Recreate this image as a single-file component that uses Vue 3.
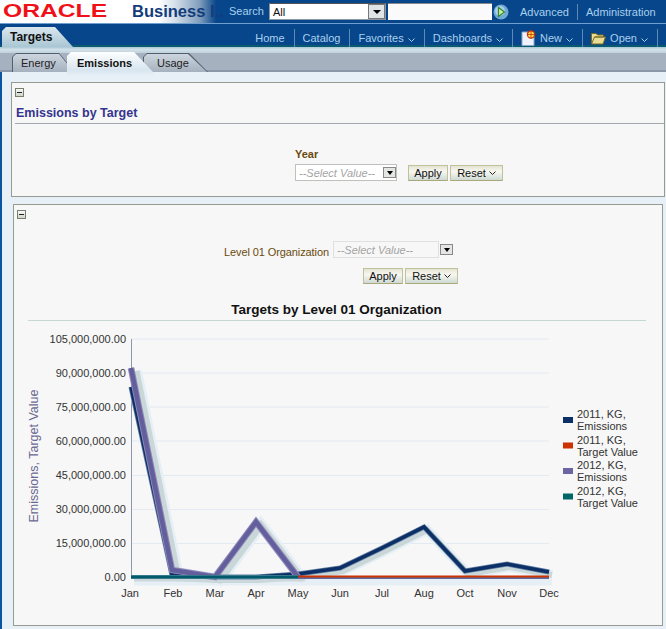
<script setup>
const navItems = [
  { label: 'Home' },
  { label: 'Catalog' },
  { label: 'Favorites', caret: true },
  { label: 'Dashboards', caret: true },
  { label: 'New', caret: true, icon: 'new' },
  { label: 'Open', caret: true, icon: 'open' }
]
const gridYs = [339, 373, 407, 441, 475.5, 509.5, 543.5]
const yLabels = ['105,000,000.00','90,000,000.00','75,000,000.00','60,000,000.00','45,000,000.00','30,000,000.00','15,000,000.00','0.00']
const months = [['Jan',130],['Feb',173],['Mar',215],['Apr',256],['May',298],['Jun',340],['Jul',382],['Aug',424],['Oct',465],['Nov',507],['Dec',549]]
const e2011 = '131,387 172,575 215,577 256,577 298,574 340,568 382,548 424,527 465,571 507,564 549,572'
const e2012 = '131,368 172,570 215,577 256,522 298,577'
const legend = [
  { a: '2011, KG,', b: 'Emissions', c: '#0c2f66' },
  { a: '2011, KG,', b: 'Target Value', c: '#cc3300' },
  { a: '2012, KG,', b: 'Emissions', c: '#6b66a3' },
  { a: '2012, KG,', b: 'Target Value', c: '#006666' }
]
</script>

<template>
  <div class="page">
    <header class="top">
      <div class="brand">
        <span class="oracle">ORACLE</span>
        <span class="bi">Business I..</span>
      </div>
      <div class="search">
        <span class="s-label">Search</span>
        <div class="s-select"><span>All</span><i class="s-drop"><b></b></i></div>
        <div class="s-input"></div>
        <svg class="go" width="16" height="16" viewBox="0 0 16 16">
          <circle cx="8" cy="8" r="7.5" fill="#6fa8d4"/>
          <circle cx="7" cy="7" r="5" fill="#a9d0e8"/>
          <path d="M5.5 3.5 L11.5 8 L5.5 12.5 Z" fill="#cfe8a8" stroke="#2f8a2f" stroke-width="1.2"/>
        </svg>
        <a class="t-link adv">Advanced</a>
        <a class="t-link admin">Administration</a>
      </div>
    </header>

    <nav class="nav">
      <div class="main-tab">Targets</div>
      <ul class="menu">
        <li v-for="n in navItems" :key="n.label">
          <svg v-if="n.icon === 'new'" width="15" height="16" viewBox="0 0 15 16" class="ic">
            <path d="M1 2 H10 L13 5 V15.5 H1 Z" fill="#eef2fa" stroke="#8fa4cc"/>
            <circle cx="10" cy="4.5" r="3.6" fill="#ffe040" stroke="#c83010" stroke-width="1.2"/>
            <path d="M10 .5 V8.5 M6 4.5 H14" stroke="#c83010" stroke-width=".8"/>
          </svg>
          <svg v-if="n.icon === 'open'" width="15" height="13" viewBox="0 0 15 13" class="ic">
            <path d="M0.5 12 V1.5 H5 L6.5 3 H12.5 V5 H3.5 L0.5 12 H12 L14.5 5 H3.5" fill="#e9dd96" stroke="#7b6a22"/>
          </svg>
          <span>{{ n.label }}</span>
          <svg v-if="n.caret" width="7" height="4" viewBox="0 0 7 4" class="caret"><path d="M.5 .5 L3.5 3.5 L6.5 .5" fill="none" stroke="currentColor"/></svg>
        </li>
      </ul>
    </nav>
    <div class="stripe"></div>

    <div class="subtabs">
      <div class="st st-a"><span>Energy</span></div>
      <div class="st st-b"><span>Usage</span></div>
      <div class="st st-on"><span>Emissions</span></div>
    </div>

    <main class="content">
      <section class="panel p1">
        <i class="toggle"></i>
        <h2 class="title">Emissions by Target</h2>
        <div class="prompt1">
          <div class="year-col">
            <div class="year">Year</div>
            <div class="fake-select sel1"><em>--Select Value--</em><i class="mini"><b></b></i></div>
          </div>
          <div class="btns btns1">
            <button class="btn b-apply">Apply</button>
            <button class="btn b-reset">Reset <svg width="7" height="4" viewBox="0 0 7 4"><path d="M.5 .5 L3.5 3.5 L6.5 .5" fill="none" stroke="#222"/></svg></button>
          </div>
        </div>
      </section>

      <section class="panel p2">
        <i class="toggle"></i>
        <div class="prompt2">
          <span class="lvl">Level 01 Organization</span>
          <div class="fake-select sel2"><em>--Select Value--</em></div>
          <i class="mini"><b></b></i>
        </div>
        <div class="btns btns2">
          <button class="btn b-apply">Apply</button>
          <button class="btn b-reset">Reset <svg width="7" height="4" viewBox="0 0 7 4"><path d="M.5 .5 L3.5 3.5 L6.5 .5" fill="none" stroke="#222"/></svg></button>
        </div>
        <h3 class="chart-title">Targets by Level 01 Organization</h3>
        <div class="chart-rule"></div>
        <svg class="chart" width="647" height="296" viewBox="14 329 647 296">
          <line v-for="y in gridYs" :key="y" x1="131" x2="549" :y1="y" :y2="y" stroke="#e2eaf3"/>
          <line x1="131.5" x2="131.5" y1="339" y2="578" stroke="#8f98aa"/>
          <text v-for="(l, i) in yLabels" :key="l" x="126" :y="343 + i * 34.05" text-anchor="end" class="ax">{{ l }}</text>
          <text v-for="m in months" :key="m[0]" :x="m[1]" y="597" text-anchor="middle" class="ax">{{ m[0] }}</text>
          <text transform="translate(38 456) rotate(-90)" text-anchor="middle" class="ytitle">Emissions, Target Value</text>

          <g fill="none" stroke-linejoin="miter">
            <polyline :points="e2011" stroke="#e6eff6" stroke-width="10" transform="translate(3 3)"/>
            <polyline :points="e2012" stroke="#e6eff6" stroke-width="12" transform="translate(5 3)"/>
            <polyline points="131,578 549,578" stroke="#e6eff6" stroke-width="9" transform="translate(3 3)"/>
            <polyline :points="e2011" stroke="#c9d7d8" stroke-width="6" transform="translate(3 3)"/>
            <polyline :points="e2012" stroke="#c9d7d8" stroke-width="7" transform="translate(5 3)"/>
            <polyline points="134,580 305,580" stroke="#cdd8dc" stroke-width="3"/>
            <polyline :points="e2011" stroke="#5f7ca0" stroke-width="5"/>
            <polyline :points="e2011" stroke="#0c2f66" stroke-width="3.5"/>
            <polyline :points="e2012" stroke="#9088b8" stroke-width="6.5"/>
            <polyline :points="e2012" stroke="#635e9c" stroke-width="4.5"/>
            <polyline points="298,578 549,578" stroke="#5f6aa0" stroke-width="2"/>
            <polyline points="298,576.5 549,576.5" stroke="#cc3300" stroke-width="2"/>
            <polyline points="131,577 298,577" stroke="#6a9aa8" stroke-width="4"/>
            <polyline points="131,577 298,577" stroke="#005a6c" stroke-width="3"/>
          </g>

          <g v-for="(l, i) in legend" :key="i" :transform="`translate(0 ${i * 25.5})`">
            <rect x="563" y="417" width="10" height="6" :fill="l.c"/>
            <text x="577" y="418" class="lg">{{ l.a }}</text>
            <text x="577" y="430" class="lg">{{ l.b }}</text>
          </g>
        </svg>
      </section>
    </main>
  </div>
</template>

<style scoped>
.page { width: 666px; height: 629px; overflow: hidden; background: #e3edf6; font-family: "Liberation Sans", sans-serif; font-size: 11px; color: #222; }
.top { height: 23px; display: flex; background: #07468a; border-bottom: 1px solid #6f9fce; }
.brand { width: 224px; flex: none; display: flex; align-items: center; background: linear-gradient(90deg, #fff 0, #fff 158px, #d5dfe9 175px, #7f9cbc 200px, #07468a 216px); }
.oracle { width: 132px; flex: none; box-sizing: border-box; padding-left: 3px; color: #f01018; font: bold 18px/23px "Liberation Sans", sans-serif; transform: scaleX(1.37); transform-origin: 3px 50%; }
.bi { color: #123c7c; font: bold 16.5px/23px "Liberation Sans", sans-serif; white-space: nowrap; }
.search { flex: 1; display: flex; align-items: center; color: #a9d0ee; }
.s-label { width: 40px; flex: none; margin-left: 5px; padding-bottom: 1px; }
.s-select { width: 117px; height: 17px; background: #fff; border: 1px solid #8a98a8; border-top-color: #555; box-sizing: border-box; display: flex; justify-content: space-between; align-items: center; color: #111; padding-left: 3px; }
.s-drop { width: 17px; height: 15px; background: #dfe4e6; border: 1px solid #777; box-sizing: border-box; display: flex; align-items: center; justify-content: center; }
.s-drop b { border: 4px solid transparent; border-top: 4px solid #000; border-bottom: 0; }
.s-input { width: 104px; height: 17px; background: #fafafa; border-top: 1px solid #888; box-sizing: border-box; margin-left: 2px; }
.go { margin-left: 1px; flex: none; }
.t-link { white-space: nowrap; }
.adv { margin-left: 11px; padding-right: 8px; border-right: 1px solid #5f8ab3; line-height: 16px; }
.admin { padding: 0 10px 0 8px; border-right: 1px solid #5f8ab3; line-height: 16px; }
.nav { height: 23px; background: linear-gradient(#07468a 0 21px, #0a5a70 21px); display: flex; }
.main-tab { margin: 3px 0 0 2px; width: 71px; height: 20px; flex: none; box-sizing: border-box; padding: 3px 0 0 8px; font-weight: bold; font-size: 12px; color: #111; line-height: 15px; background: linear-gradient(#dbe7ee, #a9c6d4); clip-path: polygon(0 4px, 4px 0, 53px 0, 71px 20px, 0 20px); }
.menu { list-style: none; margin: 5px 8px 0 0; padding: 0; flex: 1; display: flex; justify-content: flex-end; color: #a9d0ee; }
.menu li { display: flex; align-items: center; gap: 4px; height: 18px; padding: 0 9px 0 8px; border-right: 1px solid #5f8ab3; white-space: nowrap; }
.caret { margin-top: 3px; }
.ic { flex: none; }
.stripe { height: 6px; background: linear-gradient(#a8c8d6, #d3e0e8 40%, #bfd2dc); }
.subtabs { height: 19px; background: linear-gradient(#a6b1bf 0 17px, #8d96a8 17px); display: flex; padding-left: 12px; position: relative; z-index: 1; }
.st { position: relative; height: 19px; line-height: 20px; color: #222; background: #55606e; }
.st span { position: relative; z-index: 1; }
.st::before { content: ""; position: absolute; inset: 1px 1px 0 1px; }
.st-a { width: 58px; flex: none; padding-left: 9px; box-sizing: border-box; clip-path: polygon(0 4px, 4px 0, 47px 0, 58px 13px, 58px 19px, 0 19px); }
.st-a::before { background: linear-gradient(#cdd6de, #a6b1bf); clip-path: polygon(0 3px, 3px 0, 46px 0, 56px 12px, 56px 18px, 0 18px); }
.st-b { width: 65px; flex: none; order: 3; margin-left: -10px; padding-left: 14px; box-sizing: border-box; clip-path: polygon(0 4px, 4px 0, 46px 0, 65px 19px, 0 19px); }
.st-b::before { background: linear-gradient(#cdd6de, #a6b1bf); clip-path: polygon(0 3px, 3px 0, 44px 0, 63px 18px, 0 18px); }
.st-on { order: 2; z-index: 2; width: 86px; flex: none; margin-left: -3px; margin-top: -1px; height: 24px; padding-left: 10px; box-sizing: border-box; font-weight: bold; color: #111; line-height: 22px; background: linear-gradient(#fdfefe, #d8e5ef 75%, #e8f0f7); clip-path: polygon(0 4px, 4px 0, 67px 0, 86px 20px, 86px 24px, 0 24px); }
.st-on::before { display: none; }
.content { height: 557px; border-left: 2px solid #0a55a0; padding: 10px 0 0 9px; box-sizing: border-box; background: #e8f0f7; }
.panel { background: #f7f7f7; border: 1px solid #979c93; box-sizing: border-box; }
.p1 { width: 654px; height: 115px; padding: 5px 0 0 3px; }
.p2 { width: 650px; height: 422px; margin: 7px 0 0 2px; padding: 5px 0 0 3px; overflow: hidden; }
.toggle { display: block; width: 9px; height: 9px; border: 1px solid #77806f; background: linear-gradient(#fafafa, #cfd3c8); position: relative; box-sizing: border-box; }
.toggle::after { content: ""; position: absolute; left: 1px; right: 1px; top: 3px; height: 1px; background: #222; }
.title { margin: 8px 0 0 0; padding: 0 0 2px 1px; font: bold 12.5px/16px "Liberation Sans", sans-serif; color: #35348f; border-bottom: 1px solid #a3a8ae; }
.prompt1 { display: flex; align-items: flex-end; margin: 23px 0 0 280px; }
.year { font-weight: bold; color: #6b4a0d; line-height: 14px; }
.fake-select { background: #fff; border: 1px solid #c0c0bd; box-sizing: border-box; display: flex; align-items: center; color: #a4a4a4; }
.fake-select em { padding-left: 3px; white-space: nowrap; }
.sel1 { width: 102px; height: 17px; margin-top: 3px; justify-content: space-between; }
.mini { width: 13px; height: 11px; background: #e4e6e4; border: 1px solid #8a8a8a; box-sizing: border-box; display: flex; align-items: center; justify-content: center; flex: none; }
.mini b { border: 3.5px solid transparent; border-top: 4px solid #000; border-bottom: 0; }
.btns { display: flex; gap: 2px; }
.btns1 { margin-left: 11px; }
.btn { height: 16px; padding: 0; font: 11px/14px "Liberation Sans", sans-serif; color: #111; background: linear-gradient(#e4e4d4, #f7f7f0 40%, #cfdad4); border: 1px solid #c2c29a; border-bottom-color: #a8a878; box-sizing: border-box; display: flex; align-items: center; justify-content: center; gap: 3px; }
.b-apply { width: 40px; }
.b-reset { width: 53px; }
.prompt2 { display: flex; align-items: center; margin: 22px 0 0 207px; height: 17px; }
.lvl { color: #6b4a0d; width: 109px; flex: none; padding-top: 4px; white-space: nowrap; letter-spacing: -.1px; }
.sel2 { width: 106px; height: 17px; background: #f7f7f7; border-color: #e0e0de; margin-right: 1px; flex: none; }
.btns2 { margin: 10px 0 0 346px; }
.chart-title { margin: 17px 0 0 -3px; text-align: center; width: 645px; font: bold 13.5px/17px "Liberation Sans", sans-serif; color: #111; }
.chart-rule { height: 1px; margin: 2px 0 0 11px; width: 618px; background: #c6d8d2; }
.chart { display: block; margin: 8px 0 0 -3px; }
.ax { font: 11px "Liberation Sans", sans-serif; fill: #333; }
.ytitle { font: 12.5px "Liberation Sans", sans-serif; fill: #6b6892; }
.lg { font: 11px "Liberation Sans", sans-serif; fill: #333; }
</style>
